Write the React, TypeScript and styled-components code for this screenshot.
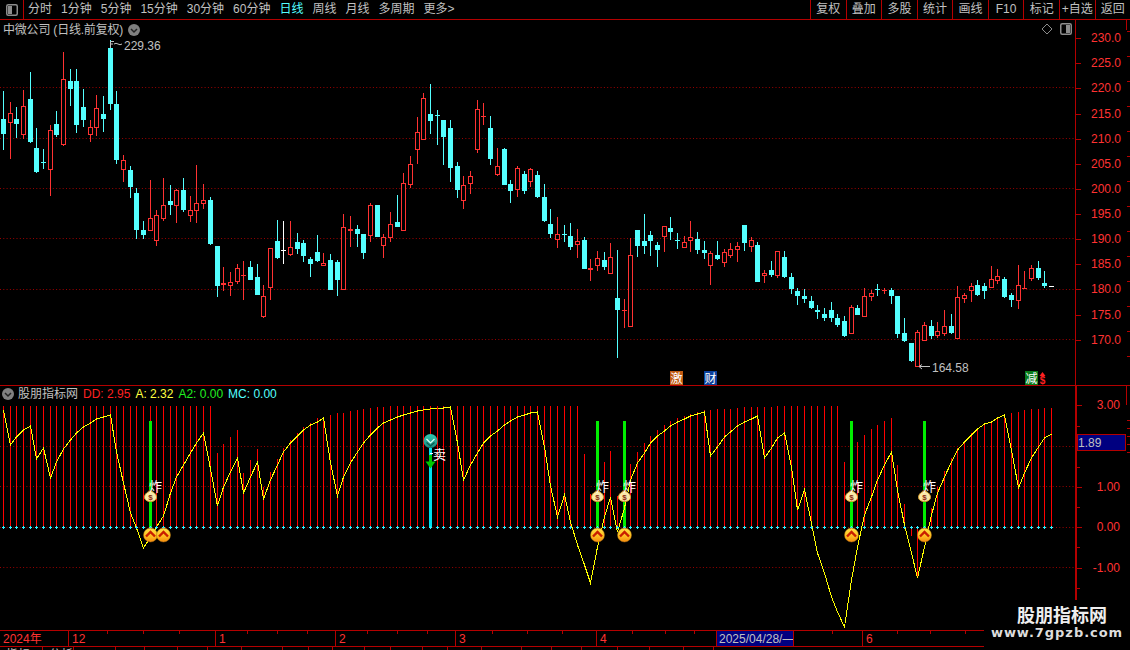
import React from "react";
import styled, { createGlobalStyle } from "styled-components";

const FONT = `"Liberation Sans", "Noto Sans CJK SC", sans-serif`;
const LINE = "#b40000";
const GREY = "#c0c0c0";
const RED = "#ff3232";
const CYAN = "#54ffff";

const GlobalStyle = createGlobalStyle`
  html, body { margin: 0; padding: 0; background: #000; }
  body { font-family: ${FONT}; }
`;

type Candle = [string, number, number, number, number];

const candles: Candle[] = [
  ["c",91,119,134,150],["r",102,113,123,159],["c",107,119,124,138],["r",90,106,135,139],["c",72,99,142,143],
  ["c",128,148,172,173],["c",149,162,163,169],["r",125,130,170,196],["c",111,124,135,137],["r",52,79,145,146],
  ["c",69,81,89,106],["c",69,81,125,133],["c",89,107,120,127],["r",120,127,135,142],["r",95,108,128,136],
  ["c",96,114,119,132],["c",40,48,104,110],["c",91,104,160,164],["r",155,160,170,182],["c",166,170,187,198],
  ["c",188,193,230,239],["c",221,230,235,239],["r",180,218,231,231],["r",210,215,241,246],["r",178,205,219,221],
  ["c",185,201,205,215],["r",189,190,206,223],["c",178,190,210,212],["r",196,210,216,222],["r",165,203,211,223],
  ["r",184,200,204,209],["c",197,200,244,245],["c",246,246,286,297],["r",267,283,285,291],["r",272,282,286,296],
  ["r",264,268,282,284],["r",261,275,276,300],["c",261,267,280,280],["c",264,277,295,295],["r",285,296,317,318],
  ["r",248,248,288,300],["c",220,241,258,259],["w",221,250,251,264],["r",221,247,255,256],["c",233,242,249,254],
  ["c",240,243,256,262],["c",257,259,264,277],["c",235,252,261,262],["r",253,263,266,266],["c",254,260,290,290],
  ["c",260,262,280,296],["r",214,227,290,290],["r",216,229,231,247],["c",225,229,234,247],["c",234,234,253,259],
  ["r",203,205,236,242],["c",205,205,237,237],["r",234,237,246,258],["r",212,224,238,242],["c",195,222,227,227],
  ["r",173,183,231,231],["r",156,164,185,188],["r",117,132,150,164],["r",93,98,140,140],["c",84,114,121,134],
  ["c",110,115,116,145],["c",120,120,137,165],["c",120,128,168,182],["c",162,166,190,198],["r",176,185,201,209],
  ["r",171,176,184,194],["r",100,109,150,153],["r",103,116,117,125],["c",116,128,159,165],["r",148,166,175,176],
  ["c",148,149,185,185],["c",180,184,191,203],["r",166,168,190,197],["c",171,174,191,194],["r",168,169,182,187],
  ["c",171,175,197,198],["c",184,197,221,222],["c",209,224,234,238],["r",217,234,240,248],["c",225,234,235,242],
  ["c",223,236,247,250],["r",229,241,245,258],["c",237,240,269,269],["r",259,268,270,281],["r",251,258,266,271],
  ["c",252,260,267,270],["r",243,257,274,274],["c",250,298,310,358],["r",299,310,311,328],["r",238,255,327,327],
  ["c",230,230,246,257],["c",214,241,246,254],["c",231,235,241,256],["c",242,245,250,267],["r",226,226,237,252],
  ["c",217,228,232,240],["c",233,240,241,249],["r",236,242,248,248],["r",221,237,241,252],["c",232,239,250,254],
  ["c",241,250,253,259],["r",251,253,266,285],["c",241,255,259,260],["r",249,252,263,267],["r",243,249,256,258],
  ["r",242,246,250,262],["c",225,225,243,251],["r",237,240,247,252],["c",242,245,282,282],["r",270,273,276,283],
  ["c",261,270,275,277],["r",251,251,276,278],["c",251,257,277,278],["c",273,277,289,294],["c",288,291,296,305],
  ["c",289,296,299,303],["c",296,301,308,309],["c",305,310,312,319],["c",308,314,318,321],["c",302,310,318,322],
  ["c",314,318,325,327],["c",316,321,336,337],["r",305,307,334,334],["c",305,308,315,315],["r",288,296,317,317],
  ["r",290,293,297,301],["c",284,289,290,296],["r",288,290,291,294],["c",288,290,296,304],["c",296,296,334,338],
  ["c",318,333,341,342],["c",343,343,361,362],["r",330,332,367,367],["r",322,325,341,341],["c",320,326,336,339],
  ["r",322,331,336,338],["r",310,326,334,336],["c",314,326,333,334],["r",286,297,339,339],["r",293,295,299,303],
  ["r",283,286,291,302],["c",280,285,295,296],["c",283,286,291,299],["r",266,279,288,288],["r",269,276,281,284],
  ["c",277,279,297,298],["c",293,295,300,307],["r",265,285,301,309],["r",271,288,289,289],["r",265,268,279,281],
  ["c",261,268,278,280],["c",271,283,286,288],["w",286,286,287,287],
];

const barTops: number[] = [
  ...Array(32).fill(406),
  453,444,437,430,473,460,449,487,472,459,448,440,433,427,423,418,418,415,413,413,411,410,409,408,407,407,
  ...Array(29).fill(406),
  454,494,527,462,451,496,527,464,452,443,436,430,425,421,418,416,414,412,410,410,409,409,409,408,407,407,407,407,407,
  ...Array(10).fill(406),
  462,527,442,435,429,425,421,418,465,504,536,578,527,508,487,471,458,448,441,433,428,424,421,418,415,413,412,410,409,409,408,408,
];

const lineYs: number[] = [
  410,445,437,430,426,459,448,478,462,449,440,433,427,423,419,417,415,452,483,513,528,548,537,527,516,493,477,465,453,443,
  433,469,506,487,472,458,493,477,462,499,480,465,452,443,436,430,425,422,418,463,496,477,463,452,443,435,428,423,420,417,
  415,413,411,410,409,408,408,407,443,480,465,453,443,436,431,425,421,417,415,413,412,447,486,517,495,522,545,565,583,547,
  517,497,532,508,480,463,453,443,436,431,426,422,419,416,414,412,456,447,437,432,426,422,419,416,458,448,438,433,467,510,
  490,523,553,573,597,612,627,580,547,515,497,480,465,452,490,525,553,578,547,515,493,477,462,450,442,435,429,424,422,418,
  415,450,488,473,458,447,438,434,
];

const px = (i: number) => Math.floor(3.4 + 6.675 * i);
const priceGrid = [87, 138, 188, 238, 289, 339];
const priceLabels: [string, number][] = [
  ["230.0", 38],["225.0", 63],["220.0", 88],["215.0", 114],["210.0", 139],["205.0", 164],["200.0", 189],
  ["195.0", 214],["190.0", 239],["185.0", 264],["180.0", 289],["175.0", 315],["170.0", 340],
];
const rulerTicks = [31,56,81,106,131,156,181,206,231,256,281,306,331,356];
const indicatorGrid = [446, 486, 527, 567];
const indicatorLabels: [string, number][] = [["3.00", 405],["1.00", 487],["0.00", 527],["-1.00", 568]];
const indicatorTicks = [405,426,446,467,487,507,527,547,568,588,608];
const signalBars = [22, 89, 93, 127, 138];
const coinBars = [22, 24, 89, 93, 127, 138];
const blastBars = [22, 89, 93, 127, 138];

const tfItems = ["分时","1分钟","5分钟","15分钟","30分钟","60分钟","日线","周线","月线","多周期","更多>"];
const actions = ["复权","叠加","多股","统计","画线","F10","标记","+自选","返回"];
const timeCells: { w: number; label: string; date?: boolean }[] = [
  { w: 69, label: "2024年" },{ w: 147, label: "12" },{ w: 120, label: "1" },{ w: 120, label: "2" },
  { w: 141, label: "3" },{ w: 120, label: "4" },{ w: 77, label: "2025/04/28/—", date: true },{ w: 69, label: "" },{ w: 212, label: "6" },
];
const timeTicks = [107,143,179,247,277,307,367,397,427,492,527,562,632,665,694,832,897,930,965];
const tabWidths = [43,31,42,29,33,30,34,41,26,24,32,26,32,25,34,40,30,30,36,32,34,30];
const tabLabels = ["指标","分析"];

const Page = styled.div`
  position: relative; width: 1130px; height: 650px; background: #000; overflow: hidden;
  display: flex; flex-direction: column; font-family: ${FONT};
`;
const Toolbar = styled.div`
  flex: none; height: 20px; box-sizing: border-box; border-bottom: 1px solid ${LINE};
  display: flex; align-items: stretch; font-size: 12px; color: ${GREY};
`;
const SideToggle = styled.div`
  width: 24px; box-sizing: border-box; border-right: 1px solid ${LINE};
  display: flex; align-items: center; justify-content: center;
`;
const Periods = styled.div`display: flex; align-items: center; gap: 9px; padding-left: 4px;`;
const Period = styled.span<{ $active?: boolean }>`
  line-height: 19px; white-space: nowrap; color: ${(p) => (p.$active ? CYAN : GREY)};
`;
const Actions = styled.div`display: flex; margin-left: auto; width: 320px;`;
const Action = styled.div`
  flex: 1; box-sizing: border-box; border-left: 1px solid ${LINE};
  display: flex; align-items: center; justify-content: center; line-height: 19px; white-space: nowrap;
`;
const Panel = styled.div<{ $h: number }>`position: relative; flex: none; height: ${(p) => p.$h}px;`;
const Plot = styled.svg`display: block; width: 1130px; height: 100%;`;
const ChartTitle = styled.div`
  position: absolute; left: 3px; top: 2px; display: flex; align-items: center; gap: 5px;
  font-size: 12px; line-height: 16px; color: ${GREY}; white-space: nowrap; letter-spacing: -0.2px;
`;
const IndicatorTitle = styled.div`
  position: absolute; left: 2px; top: 1px; display: flex; align-items: center;
  font-size: 12px; line-height: 16px; white-space: nowrap;
`;
const IndicatorName = styled.span`color: ${GREY}; margin: 0 5px 0 4px;`;
const Reading = styled.span<{ $c: string }>`color: ${(p) => p.$c}; margin-right: 5px;`;
const RoundIcon = styled.svg`display: block; width: 12px; height: 12px;`;
const ToggleIcon = styled.svg`display: block; width: 12px; height: 12px;`;
const PanelTools = styled.div`
  position: absolute; left: 1041px; top: 3px; display: flex; align-items: center; gap: 7px;
`;
const TimeBar = styled.div`
  position: relative; flex: none; height: 16px; box-sizing: border-box; border-top: 1px solid ${LINE};
  display: flex; font-size: 12px; color: ${RED};
`;
const TimeCell = styled.div<{ $w: number; $date?: boolean }>`
  flex: none; width: ${(p) => p.$w}px; box-sizing: border-box; padding-left: ${(p) => (p.$date ? 2 : 3)}px;
  border-right: 1px solid ${LINE}; line-height: 16px; white-space: nowrap; overflow: hidden;
  background: ${(p) => (p.$date ? "#000080" : "transparent")};
  color: ${(p) => (p.$date ? GREY : RED)};
`;
const TimeTicks = styled.svg`position: absolute; left: 0; top: 0; width: 1130px; height: 3px; pointer-events: none;`;
const TabRow = styled.div`
  flex: none; height: 4px; box-sizing: border-box; border-top: 1px solid ${LINE};
  display: flex; overflow: hidden; font-size: 12px; color: ${GREY};
`;
const Tab = styled.div<{ $w: number }>`
  flex: none; width: ${(p) => p.$w}px; box-sizing: border-box; padding-left: 6px;
  border-right: 1px solid ${LINE}; line-height: 16px; white-space: nowrap;
`;
const Watermark = styled.div`
  position: absolute; right: 0; bottom: 0; width: 146px; height: 50px; background: #000;
  display: flex; flex-direction: column; align-items: center; color: #e6e6e6;
`;
const WatermarkTitle = styled.div`
  font-family: "Noto Sans CJK SC", sans-serif; font-weight: 700; font-size: 18px; line-height: 22px;
  margin: 3px 0 0 10px; color: #eee;
`;
const WatermarkUrl = styled.div`
  font-family: "DejaVu Sans", sans-serif; font-weight: 700; font-size: 13px; letter-spacing: 0.95px;
  line-height: 16px; color: #ddd; white-space: nowrap;
`;

const AxisText = styled.text`font-family: ${FONT}; font-size: 12px; fill: ${RED};`;
const MarkText = styled.text`font-family: ${FONT}; font-size: 12px; fill: ${GREY};`;
const SignalText = styled.text`font-family: "Noto Sans CJK SC", sans-serif; font-size: 13px; fill: #fff;`;
const BadgeText = styled.text`font-family: "Noto Sans CJK SC", sans-serif; font-size: 12px; fill: #fff; text-anchor: middle;`;
const BagText = styled.text`font-family: ${FONT}; font-size: 8px; font-weight: 700; fill: #8a2a10; text-anchor: middle;`;
const DollarText = styled.text`font-family: ${FONT}; font-size: 10px; font-weight: 700; fill: #ff2020; text-anchor: middle;`;
const AxisValueText = styled.text`font-family: ${FONT}; font-size: 12px; fill: ${GREY};`;

const CandleMark = ({ c, i }: { c: Candle; i: number }) => {
  const [kind, wt, bt, bb, wb] = c;
  const x = px(i);
  const color = kind === "c" ? CYAN : kind === "w" ? "#ffffff" : RED;
  const thin = bb - bt <= 2;
  return (
    <g>
      {wb > wt && <rect x={x} y={wt} width={1} height={wb - wt} fill={color} />}
      {thin || kind !== "r" ? (
        <rect x={x - 2} y={bt} width={5} height={Math.max(1, bb - bt)} fill={color} />
      ) : (
        <rect x={x - 1.5} y={bt + 0.5} width={4} height={bb - bt - 1} fill="#000" stroke={color} />
      )}
    </g>
  );
};

const Coin = ({ x }: { x: number }) => (
  <g transform={`translate(${x + 0.5} 535)`}>
    <circle r={7} fill="url(#coinFill)" stroke="#a86a10" strokeWidth={0.5} />
    <path d="M-4.5 1.5 L0 -3 L4.5 1.5" fill="none" stroke="#c81e00" strokeWidth={2.4} />
    <path d="M-3 3 L0 0 L3 3" fill="none" stroke="#ffb52a" strokeWidth={1} />
  </g>
);

const Bag = ({ x }: { x: number }) => (
  <g transform={`translate(${x + 0.5} 496)`}>
    <path d="M-2 -6 L2 -6 L1 -4 L-1 -4 Z" fill="#9a5a1a" />
    <path d="M-1.5 -4.5 C-7.5 -2 -8 5.5 0 5.5 C8 5.5 7.5 -2 1.5 -4.5 Z" fill="#f9e9a8" stroke="#d8a030" strokeWidth={1} />
    <BagText y={3.5}>$</BagText>
  </g>
);

const SellMarker = ({ x }: { x: number }) => (
  <g>
    <rect x={x - 1} y={448} width={3} height={79} fill="#00e0f0" />
    <rect x={x - 1} y={455} width={3} height={7} fill="#00c800" />
    <path d={`M${x - 4.5} 461.5 L${x + 5.5} 461.5 L${x + 0.5} 468.5 Z`} fill="#00c800" />
    <circle cx={x + 0.5} cy={441} r={7} fill="url(#sellFill)" />
    <path d={`M${x - 3.5} 439 L${x + 0.5} 443 L${x + 4.5} 439`} fill="none" stroke="#d8fff4" strokeWidth={1.2} />
    <path d={`M${x - 3.5} 442.5 L${x + 0.5} 446 L${x + 4.5} 442.5`} fill="none" stroke="#0c5a50" strokeWidth={1.2} />
    <rect x={430} y={453} width={3} height={1} fill="#fff" />
    <SignalText x={433} y={459}>卖</SignalText>
  </g>
);

const PriceChart = () => (
  <Plot viewBox="0 20 1130 365">
    {priceGrid.map((y) => (
      <line key={y} x1={0} x2={1075} y1={y + 0.5} y2={y + 0.5} stroke="#9a0000" strokeDasharray="1 2.3" />
    ))}
    {candles.map((c, i) => <CandleMark key={i} c={c} i={i} />)}
    <path d="M110.5 48 V41.5 H114 M110.5 44 H113 M114 44 Q116 42.5 118 44 T122 44" fill="none" stroke={GREY} strokeWidth={1} />
    <MarkText x={124} y={50}>229.36</MarkText>
    <path d="M930 366.5 H920 M922 364.5 L919 366.5 L922 369" fill="none" stroke={GREY} strokeWidth={1} />
    <MarkText x={932} y={372}>164.58</MarkText>
    <rect x={670} y={371} width={13} height={14} fill="#c05a10" />
    <BadgeText x={676.5} y={383}>激</BadgeText>
    <rect x={704} y={371} width={13} height={14} fill="#0a3f9a" />
    <BadgeText x={710.5} y={383}>财</BadgeText>
    <rect x={1025} y={371} width={13} height={14} fill="#0a7a1a" />
    <BadgeText x={1031.5} y={383}>减</BadgeText>
    <path d="M1042.5 372 L1045.5 376 H1039.5 Z" fill="#ff2020" />
    <DollarText x={1042.5} y={384}>$</DollarText>
    <rect x={1075} y={20} width={1} height={365} fill={LINE} />
    {priceLabels.map(([t, y]) => (
      <g key={t}>
        <rect x={1076} y={y} width={5} height={1} fill={LINE} />
        <AxisText x={1121} y={y + 4} textAnchor="end">{t}</AxisText>
      </g>
    ))}
    {rulerTicks.map((y) => <rect key={y} x={1127} y={y} width={3} height={1} fill={LINE} />)}
    <rect x={1126} y={20} width={1} height={10} fill={LINE} />
  </Plot>
);

const IndicatorChart = () => (
  <Plot viewBox="0 385 1130 245">
    <defs>
      <linearGradient id="coinFill" x1="0" y1="0" x2="0" y2="1">
        <stop offset="0" stopColor="#ffe24a" />
        <stop offset="0.55" stopColor="#ffc21e" />
        <stop offset="1" stopColor="#f58a10" />
      </linearGradient>
      <linearGradient id="sellFill" x1="0" y1="0" x2="0" y2="1">
        <stop offset="0" stopColor="#34c8b0" />
        <stop offset="1" stopColor="#1a8a80" />
      </linearGradient>
    </defs>
    <rect x={0} y={385} width={1130} height={1} fill={LINE} />
    {indicatorGrid.map((y) => (
      <line key={y} x1={0} x2={1075} y1={y + 0.5} y2={y + 0.5} stroke="#9a0000" strokeDasharray="1 2.3" />
    ))}
    {barTops.map((top, i) => (
      <rect key={i} x={px(i)} y={Math.min(top, 527)} width={1} height={Math.abs(527 - top)} fill="#ff0000" />
    ))}
    {signalBars.map((i) => <rect key={i} x={px(i) - 1} y={421} width={3} height={106} fill="#00ee00" />)}
    <SellMarker x={px(64)} />
    <polyline
      points={lineYs.map((y, i) => `${px(i) + 0.5},${y}`).join(" ")}
      fill="none" stroke="#ffff00" strokeWidth={1} shapeRendering="crispEdges"
    />
    {barTops.map((_, i) => (
      <path key={i} d={`M${px(i) - 1} 527.5 H${px(i) + 2} M${px(i) + 0.5} 526 V529`} stroke="#30f0ff" strokeWidth={1} />
    ))}
    {coinBars.map((i) => <Coin key={i} x={px(i)} />)}
    {blastBars.map((i) => (
      <g key={i}>
        <Bag x={px(i)} />
        <SignalText x={px(i) - 1} y={491}>炸</SignalText>
      </g>
    ))}
    <rect x={1075} y={385} width={2} height={245} fill={LINE} />
    <rect x={1126} y={385} width={1} height={20} fill={LINE} />
    {indicatorTicks.map((y, n) => (
      <rect key={y} x={1077} y={y} width={n % 2 === 0 ? 5 : 3} height={1} fill={LINE} />
    ))}
    {indicatorLabels.map(([t, y]) => (
      <AxisText key={t} x={1120} y={y + 4} textAnchor="end">{t}</AxisText>
    ))}
    {[420, 428, 436, 444, 452].map((y) => <rect key={y} x={1127} y={y} width={3} height={1} fill={LINE} />)}
    <rect x={1077.5} y={434.5} width={48} height={16} fill="#000080" stroke={LINE} />
    <AxisValueText x={1078} y={447}>1.89</AxisValueText>
  </Plot>
);

export default function App() {
  return (
    <>
      <GlobalStyle />
      <Page>
        <Toolbar>
          <SideToggle>
            <ToggleIcon viewBox="0 0 12 12">
              <rect x={0.75} y={0.75} width={10.5} height={10.5} rx={1.5} fill="none" stroke="#8c8c8c" strokeWidth={1.5} />
              <rect x={2} y={2} width={4} height={8} fill="#8c8c8c" />
            </ToggleIcon>
          </SideToggle>
          <Periods>
            {tfItems.map((t) => <Period key={t} $active={t === "日线"}>{t}</Period>)}
          </Periods>
          <Actions>
            {actions.map((a) => <Action key={a}>{a}</Action>)}
          </Actions>
        </Toolbar>
        <Panel $h={365}>
          <PriceChart />
          <ChartTitle>
            <span>中微公司 (日线.前复权)</span>
            <RoundIcon viewBox="0 0 12 12">
              <circle cx={6} cy={6} r={6} fill="#808080" />
              <path d="M3 5 L6 8 L9 5" fill="none" stroke="#222" strokeWidth={1.5} />
            </RoundIcon>
          </ChartTitle>
          <PanelTools>
            <ToggleIcon viewBox="0 0 12 12">
              <path d="M6 1 L11 6 L6 11 L1 6 Z" fill="none" stroke="#8c8c8c" strokeWidth={1} />
            </ToggleIcon>
            <ToggleIcon viewBox="0 0 12 12">
              <rect x={0.75} y={0.75} width={10.5} height={10.5} rx={1.5} fill="none" stroke="#8c8c8c" strokeWidth={1.5} />
              <rect x={6} y={2} width={4} height={8} fill="#8c8c8c" />
            </ToggleIcon>
          </PanelTools>
        </Panel>
        <Panel $h={245}>
          <IndicatorChart />
          <IndicatorTitle>
            <RoundIcon viewBox="0 0 12 12">
              <circle cx={6} cy={6} r={6} fill="#808080" />
              <path d="M3 5 L6 8 L9 5" fill="none" stroke="#222" strokeWidth={1.5} />
            </RoundIcon>
            <IndicatorName>股朋指标网</IndicatorName>
            <Reading $c="#ff2020">DD: 2.95</Reading>
            <Reading $c="#ffff40">A: 2.32</Reading>
            <Reading $c="#20f020">A2: 0.00</Reading>
            <Reading $c={CYAN}>MC: 0.00</Reading>
          </IndicatorTitle>
        </Panel>
        <TimeBar>
          {timeCells.map((c) => <TimeCell key={c.w + c.label} $w={c.w} $date={c.date}>{c.label}</TimeCell>)}
          <TimeTicks viewBox="0 0 1130 3">
            {timeTicks.map((x) => <rect key={x} x={x} y={0} width={1} height={3} fill={LINE} />)}
          </TimeTicks>
        </TimeBar>
        <TabRow>
          {tabWidths.map((w, i) => <Tab key={i} $w={w}>{tabLabels[i]}</Tab>)}
        </TabRow>
        <Watermark>
          <WatermarkTitle>股朋指标网</WatermarkTitle>
          <WatermarkUrl>www.7gpzb.com</WatermarkUrl>
        </Watermark>
      </Page>
    </>
  );
}
